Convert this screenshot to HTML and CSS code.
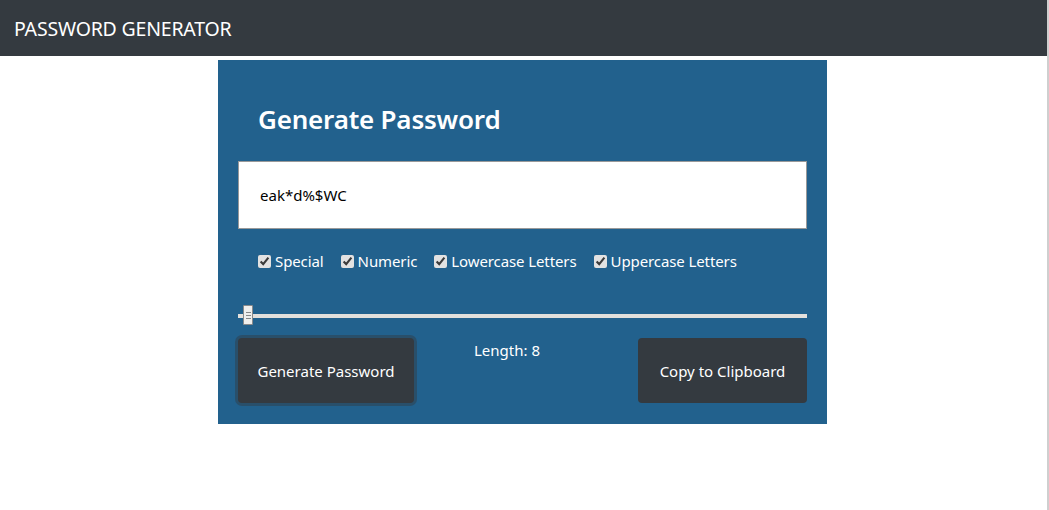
FILE: index.html
```html
<!DOCTYPE html>
<html>
<head>
<meta charset="utf-8">
<link rel="stylesheet" href="styles.css">
</head>
<body>
<nav class="navbar"><span class="brand">PASSWORD GENERATOR</span></nav>
<main class="card">
  <h2 class="title">Generate Password</h2>
  <div class="output">eak*d%$WC</div>
  <div class="options">
    <label class="opt"><input type="checkbox" checked> Special</label>
    <label class="opt"><input type="checkbox" checked> Numeric</label>
    <label class="opt"><input type="checkbox" checked> Lowercase Letters</label>
    <label class="opt"><input type="checkbox" checked> Uppercase Letters</label>
  </div>
  <div class="slider-row">
    <div class="track"><div class="thumb"><span></span><span></span><span></span></div></div>
  </div>
  <div class="actions">
    <button class="btn btn-focus">Generate Password</button>
    <div class="length">Length: 8</div>
    <button class="btn btn-copy">Copy to Clipboard</button>
  </div>
</main>
</body>
</html>
```
FILE: styles.css
```css
html, body { margin: 0; padding: 0; }
body {
  font-family: "Noto Sans", "Open Sans", sans-serif;
  background: #fff;
  width: 1047px;
  height: 510px;
  border-right: 2px solid #cfcfcf;
  overflow: hidden;
}
.navbar {
  height: 56px;
  background: #343a40;
  display: flex;
  align-items: center;
  padding-left: 14px;
}
.brand {
  color: #fff;
  font-size: 19.5px;
  letter-spacing: -0.2px;
}
.card {
  width: 609px;
  margin: 4px auto 0 218px;
  background: #22618d;
  box-sizing: border-box;
  padding: 20px 20px 20px 20px;
  height: 364px;
  display: flex;
  flex-direction: column;
}
.title {
  margin: 19px 0 0 20px;
  color: #fff;
  font-size: 26px;
  font-weight: 600;
  line-height: 40px;
  letter-spacing: -0.2px;
}
.output {
  margin-top: 22px;
  height: 66px;
  background: #fff;
  border: 1px solid #999;
  display: flex;
  align-items: center;
  padding-left: 21px;
  font-size: 15px;
  color: #000;
}
.options {
  display: flex;
  gap: 17px;
  margin: 21px 0 0 20px;
  color: #fff;
  font-size: 15px;
  line-height: 22px;
  letter-spacing: -0.1px;
}
.opt { display: flex; align-items: center; gap: 4px; }
.opt input { margin: 0; width: 13px; height: 13px; accent-color: #e2e2e2; }
.slider-row { margin-top: 34px; height: 20px; display: flex; align-items: center; }
.track {
  position: relative;
  width: 100%;
  height: 4px;
  background: #e3e0dc;
}
.thumb {
  position: absolute;
  left: 5px;
  top: -9px;
  width: 8px;
  height: 18px;
  background: #f0efed;
  border: 1px solid #8a8a8a;
  border-radius: 1px;
  display: flex;
  flex-direction: column;
  justify-content: center;
  align-items: center;
  gap: 2px;
}
.thumb span { width: 5px; height: 1px; background: #888; }
.actions {
  margin-top: 12px;
  display: flex;
  justify-content: space-between;
  align-items: flex-start;
}
.btn {
  background: #343a40;
  color: #fff;
  border: none;
  border-radius: 4px;
  font-family: inherit;
  font-size: 15px;
  height: 65px;
  padding: 0;
  white-space: nowrap;
  box-sizing: border-box;
}
.btn-focus { box-shadow: 0 0 0 3px rgba(52, 58, 64, 0.45); width: 176px; }
.btn-copy { width: 169px; }
.length {
  color: #fff;
  font-size: 15px;
  margin-top: 2px;
  margin-right: 38px;
}
```
